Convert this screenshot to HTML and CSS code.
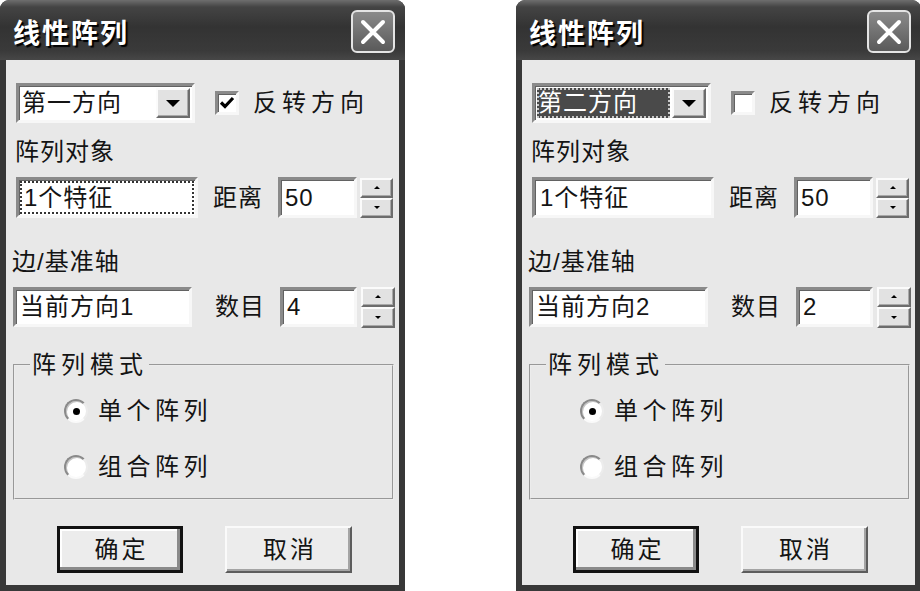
FILE: index.html
```html
<!DOCTYPE html>
<html lang="zh">
<head>
<meta charset="utf-8">
<title>线性阵列</title>
<link rel="stylesheet" href="styles.css">
</head>
<body>
<div class="stage">

  <div class="dialog">
    <div class="titlebar">
      <span class="title">线性阵列</span>
      <span class="close"><svg width="26" height="26" viewBox="0 0 26 26"><path d="M3 3 L23 23 M23 3 L3 23" stroke="#fff" stroke-width="4" stroke-linecap="round"/></svg></span>
    </div>
    <div class="client">
      <div class="row row1">
        <div class="combo sunken">
          <span class="combo-text">第一方向</span>
          <span class="combo-btn raised"><i class="tri-down"></i></span>
        </div>
        <span class="check sunken"><svg width="18" height="18" viewBox="0 0 18 18"><path d="M3 8.5 L7 12.5 L15 4" fill="none" stroke="#000" stroke-width="3.2"/></svg></span>
        <span class="check-label">反转方向</span>
      </div>
      <div class="label label1">阵列对象</div>
      <div class="row row2">
        <div class="field field1 sunken"><span class="focus">1个特征</span></div>
        <span class="lbl lbl-dist">距离</span>
        <div class="field spinfield1 sunken">50</div>
        <div class="spin spin1">
          <span class="spin-btn raised"><i class="tri-up-s"></i></span>
          <span class="spin-btn raised"><i class="tri-down-s"></i></span>
        </div>
      </div>
      <div class="label label2">边/基准轴</div>
      <div class="row row3">
        <div class="field field2 sunken">当前方向1</div>
        <span class="lbl lbl-num">数目</span>
        <div class="field spinfield2 sunken">4</div>
        <div class="spin spin2">
          <span class="spin-btn raised"><i class="tri-up-s"></i></span>
          <span class="spin-btn raised"><i class="tri-down-s"></i></span>
        </div>
      </div>
      <fieldset class="group">
        <legend>阵列模式</legend>
        <div class="radios">
          <div class="radio-row"><span class="radio on"><i></i></span><span class="radio-label">单个阵列</span></div>
          <div class="radio-row second"><span class="radio"></span><span class="radio-label">组合阵列</span></div>
        </div>
      </fieldset>
      <div class="buttons">
        <span class="btn default">确定</span>
        <span class="btn cancel">取消</span>
      </div>
    </div>
  </div>

  <div class="dialog">
    <div class="titlebar">
      <span class="title">线性阵列</span>
      <span class="close"><svg width="26" height="26" viewBox="0 0 26 26"><path d="M3 3 L23 23 M23 3 L3 23" stroke="#fff" stroke-width="4" stroke-linecap="round"/></svg></span>
    </div>
    <div class="client">
      <div class="row row1">
        <div class="combo sunken">
          <span class="combo-text sel">第二方向</span>
          <span class="combo-btn raised"><i class="tri-down"></i></span>
        </div>
        <span class="check sunken"></span>
        <span class="check-label">反转方向</span>
      </div>
      <div class="label label1">阵列对象</div>
      <div class="row row2">
        <div class="field field1 sunken"><span class="nofocus">1个特征</span></div>
        <span class="lbl lbl-dist">距离</span>
        <div class="field spinfield1 sunken">50</div>
        <div class="spin spin1">
          <span class="spin-btn raised"><i class="tri-up-s"></i></span>
          <span class="spin-btn raised"><i class="tri-down-s"></i></span>
        </div>
      </div>
      <div class="label label2">边/基准轴</div>
      <div class="row row3">
        <div class="field field2 sunken">当前方向2</div>
        <span class="lbl lbl-num">数目</span>
        <div class="field spinfield2 sunken">2</div>
        <div class="spin spin2">
          <span class="spin-btn raised"><i class="tri-up-s"></i></span>
          <span class="spin-btn raised"><i class="tri-down-s"></i></span>
        </div>
      </div>
      <fieldset class="group">
        <legend>阵列模式</legend>
        <div class="radios">
          <div class="radio-row"><span class="radio on"><i></i></span><span class="radio-label">单个阵列</span></div>
          <div class="radio-row second"><span class="radio"></span><span class="radio-label">组合阵列</span></div>
        </div>
      </fieldset>
      <div class="buttons">
        <span class="btn default">确定</span>
        <span class="btn cancel">取消</span>
      </div>
    </div>
  </div>

</div>
</body>
</html>
```

FILE: styles.css
```css
* { box-sizing: border-box; }
html, body {
  margin: 0;
  padding: 0;
  background: #fff;
  overflow: hidden;
}
body {
  font-family: "Liberation Sans", "Noto Sans CJK SC", sans-serif;
  font-size: 24px;
  color: #141414;
}
.stage {
  display: flex;
  gap: 111px;
  width: 921px;
  height: 591px;
}
.dialog {
  flex: 0 0 405px;
  height: 591px;
  display: flex;
  flex-direction: column;
  background: #383838;
  border-radius: 9px 9px 0 0;
  overflow: hidden;
}
.titlebar {
  flex: 0 0 60px;
  display: flex;
  align-items: center;
  justify-content: space-between;
  padding: 3px 10px 0 13px;
  background: linear-gradient(#6e6e6e 0, #444 7px, #333 45%, #3a3a3a 85%, #474747 100%);
}
.title {
  color: #fff;
  font-family: "Noto Sans CJK SC", sans-serif;
  font-weight: 700;
  font-size: 27px;
  letter-spacing: 2px;
  line-height: 30px;
  text-shadow: 2px 2px 1px #000;
}
.close {
  width: 44px;
  height: 43px;
  border: 2px solid #e4e4e4;
  border-radius: 6px;
  background: linear-gradient(#8a8a8a, #5a5a5a);
  display: flex;
  align-items: center;
  justify-content: center;
}
.client {
  flex: 1;
  margin: 0 6px 6px;
  background: #e8e8e8;
  display: flex;
  flex-direction: column;
}
.sunken {
  border: 3px solid;
  border-color: #8a8a8a #f7f7f7 #f7f7f7 #8a8a8a;
  box-shadow: inset 1px 1px 0 #626262;
  background: #fff;
}
.raised {
  border: 2px solid;
  border-color: #fbfbfb #6c6c6c #6c6c6c #fbfbfb;
  box-shadow: inset -1px -1px 0 #a8a8a8;
  background: #e2e2e2;
}
.row {
  display: flex;
  align-items: center;
}
.row1 {
  margin-top: 23px;
  padding-left: 10px;
  height: 40px;
}
.combo {
  width: 179px;
  height: 40px;
  display: flex;
  padding: 2px;
}
.combo-text {
  flex: 1;
  display: flex;
  align-items: center;
  padding-left: 1px;
  margin-right: 2px;
  line-height: 26px;
  letter-spacing: 1px;
}
.combo-text.sel {
  background: #4a4a4a;
  color: #fff;
  outline: 2px dotted #c8c8c8;
  outline-offset: -2px;
}
.combo-btn {
  width: 34px;
  display: flex;
  align-items: center;
  justify-content: center;
}
.tri-down {
  width: 0;
  height: 0;
  border-left: 7px solid transparent;
  border-right: 7px solid transparent;
  border-top: 7px solid #000;
}
.check {
  width: 24px;
  height: 24px;
  margin-left: 20px;
  display: flex;
  align-items: center;
  justify-content: center;
}
.check-label {
  margin-left: 14px;
  letter-spacing: 5px;
  line-height: 26px;
}
.label {
  line-height: 26px;
  letter-spacing: 1px;
}
.label1 {
  margin-top: 16px;
  padding-left: 9px;
}
.row2 {
  margin-top: 12px;
  padding-left: 10px;
  height: 41px;
}
.field {
  height: 100%;
  display: flex;
  align-items: center;
  padding-left: 4px;
  line-height: 26px;
  letter-spacing: 1px;
}
.field1 {
  width: 182px;
  padding: 1px;
}
.focus, .nofocus {
  flex: 1;
  align-self: stretch;
  display: flex;
  align-items: center;
  padding-left: 2px;
  border: 2px dotted transparent;
}
.focus {
  border-color: #333;
}
.lbl {
  letter-spacing: 1px;
  line-height: 26px;
}
.lbl-dist {
  margin-left: 15px;
}
.spinfield1 {
  margin-left: 15px;
  width: 79px;
}
.spin {
  height: 40px;
  display: flex;
  flex-direction: column;
}
.spin1 {
  margin-left: 3px;
  width: 33px;
}
.spin-btn {
  flex: 1;
  display: flex;
  align-items: center;
  justify-content: center;
}
.tri-up-s {
  width: 0;
  height: 0;
  border-left: 3px solid transparent;
  border-right: 3px solid transparent;
  border-bottom: 3px solid #000;
}
.tri-down-s {
  width: 0;
  height: 0;
  border-left: 3px solid transparent;
  border-right: 3px solid transparent;
  border-top: 3px solid #000;
}
.label2 {
  margin-top: 31px;
  padding-left: 6px;
}
.row3 {
  margin-top: 12px;
  padding-left: 7px;
  height: 40px;
}
.field2 {
  width: 179px;
}
.lbl-num {
  margin-left: 23px;
}
.spinfield2 {
  margin-left: 15px;
  width: 77px;
}
.spin2 {
  margin-left: 4px;
  width: 34px;
  height: 41px;
}
.group {
  margin: 25px 0 0 7px;
  width: 381px;
  padding: 0;
  border: 2px groove #ececec;
  min-width: 0;
}
.group legend {
  margin-left: 15px;
  padding: 0 1px 0 2px;
  line-height: 26px;
  letter-spacing: 5px;
}
.radios {
  padding: 16px 0 14px 49px;
  display: flex;
  flex-direction: column;
  gap: 22px;
}
.radio-row {
  height: 34px;
  display: flex;
  align-items: center;
}
.radio {
  width: 24px;
  height: 24px;
  border-radius: 50%;
  border: 2px solid;
  border-color: #8a8a8a #ececec #fafafa #8a8a8a;
  background: #fff;
  box-shadow: inset 1px 1px 0 #c4c4c4;
  display: flex;
  align-items: center;
  justify-content: center;
}
.radio.on i {
  width: 7px;
  height: 7px;
  border-radius: 50%;
  background: #000;
}
.radio-label {
  margin-left: 10px;
  letter-spacing: 4.5px;
  line-height: 26px;
}
.buttons {
  margin-top: 26px;
  padding-left: 51px;
  display: flex;
  gap: 42px;
}
.btn {
  height: 47px;
  display: flex;
  align-items: center;
  justify-content: center;
  background: #ececec;
  letter-spacing: 3px;
  padding-left: 3px;
  line-height: 26px;
}
.btn.default {
  width: 126px;
  border: 3px solid #111;
  box-shadow: inset -3px -3px 0 #8a8a8a, inset 2px 2px 0 #fff;
}
.btn.cancel {
  width: 127px;
  border: 2px solid;
  border-color: #fafafa #5c5c5c #5c5c5c #fafafa;
  box-shadow: inset -2px -2px 0 #a4a4a4;
}
```
